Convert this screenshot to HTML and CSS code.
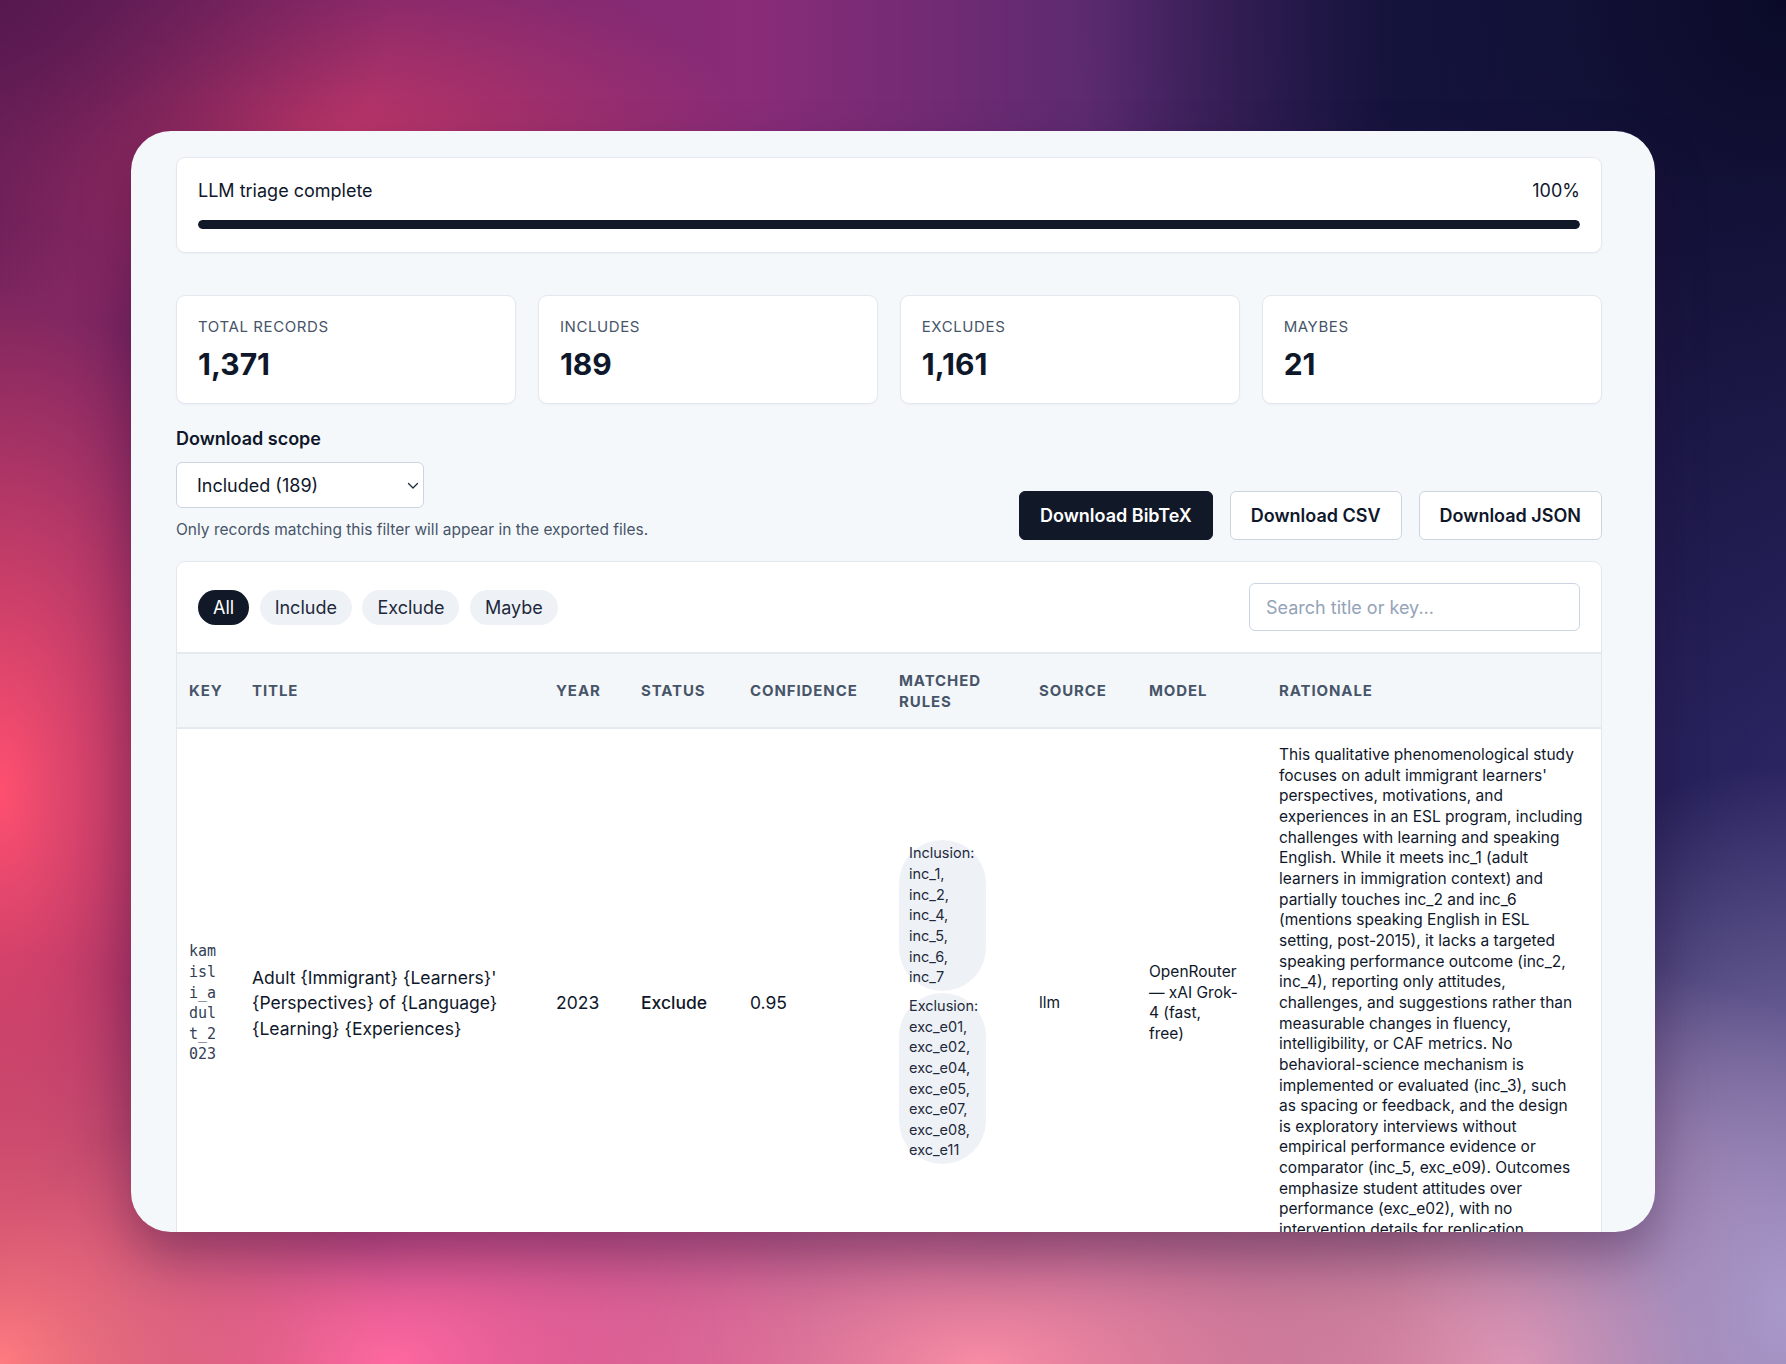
FILE: index.html
```html
<!DOCTYPE html>
<html lang="en">
<head>
  <meta charset="UTF-8">
  <title>LLM triage results</title>
  <link rel="stylesheet" href="styles.css">
</head>
<body>
  <div class="frame">
    <div class="progress-card">
      <div class="progress-head">
        <span>LLM triage complete</span>
        <span>100%</span>
      </div>
      <div class="progress-track"><div class="progress-fill" style="width: 100%"></div></div>
    </div>

    <div class="stats">
      <div class="stat">
        <div class="stat-label">Total records</div>
        <div class="stat-value">1,371</div>
      </div>
      <div class="stat">
        <div class="stat-label">Includes</div>
        <div class="stat-value">189</div>
      </div>
      <div class="stat">
        <div class="stat-label">Excludes</div>
        <div class="stat-value">1,161</div>
      </div>
      <div class="stat">
        <div class="stat-label">Maybes</div>
        <div class="stat-value">21</div>
      </div>
    </div>

    <div class="export-row">
      <div class="scope">
        <label class="scope-label" for="scope">Download scope</label>
        <div class="select-wrap">
          <select id="scope" class="scope-select">
            <option>Included (189)</option>
            <option>Excluded (1,161)</option>
            <option>Maybe (21)</option>
            <option>All (1,371)</option>
          </select>
          <svg class="chevron" width="12" height="8" viewBox="0 0 12 8" fill="none">
            <path d="M1.5 1.5 6 6l4.5-4.5" stroke="#1e293b" stroke-width="1.3" stroke-linecap="round" stroke-linejoin="round"/>
          </svg>
        </div>
        <p class="hint">Only records matching this filter will appear in the exported files.</p>
      </div>
      <div class="downloads">
        <button class="btn btn-dark">Download BibTeX</button>
        <button class="btn">Download CSV</button>
        <button class="btn">Download JSON</button>
      </div>
    </div>

    <div class="table-card">
      <div class="toolbar">
        <div class="pills">
          <button class="pill active">All</button>
          <button class="pill">Include</button>
          <button class="pill">Exclude</button>
          <button class="pill">Maybe</button>
        </div>
        <input class="search" type="text" placeholder="Search title or key...">
      </div>

      <table class="results">
        <colgroup>
          <col class="c-key">
          <col class="c-title">
          <col class="c-year">
          <col class="c-status">
          <col class="c-conf">
          <col class="c-rules">
          <col class="c-source">
          <col class="c-model">
          <col class="c-rationale">
        </colgroup>
        <thead>
          <tr>
            <th>Key</th>
            <th>Title</th>
            <th>Year</th>
            <th>Status</th>
            <th>Confidence</th>
            <th>Matched rules</th>
            <th>Source</th>
            <th>Model</th>
            <th>Rationale</th>
          </tr>
        </thead>
        <tbody>
          <tr>
            <td><div class="key-text">kamisli_adult_2023</div></td>
            <td class="big">Adult {Immigrant} {Learners}' {Perspectives} of {Language} {Learning} {Experiences}</td>
            <td class="big">2023</td>
            <td class="big status">Exclude</td>
            <td class="big">0.95</td>
            <td>
              <div class="rule-group">Inclusion: inc_1, inc_2, inc_4, inc_5, inc_6, inc_7</div>
              <div class="rule-group">Exclusion: exc_e01, exc_e02, exc_e04, exc_e05, exc_e07, exc_e08, exc_e11</div>
            </td>
            <td class="small">llm</td>
            <td class="small"><div class="model-text">OpenRouter — xAI Grok-4 (fast, free)</div></td>
            <td class="small rationale">This qualitative phenomenological study<br>
              focuses on adult immigrant learners'<br>
              perspectives, motivations, and<br>
              experiences in an ESL program, including<br>
              challenges with learning and speaking<br>
              English. While it meets inc_1 (adult<br>
              learners in immigration context) and<br>
              partially touches inc_2 and inc_6<br>
              (mentions speaking English in ESL<br>
              setting, post-2015), it lacks a targeted<br>
              speaking performance outcome (inc_2,<br>
              inc_4), reporting only attitudes,<br>
              challenges, and suggestions rather than<br>
              measurable changes in fluency,<br>
              intelligibility, or CAF metrics. No<br>
              behavioral-science mechanism is<br>
              implemented or evaluated (inc_3), such<br>
              as spacing or feedback, and the design<br>
              is exploratory interviews without<br>
              empirical performance evidence or<br>
              comparator (inc_5, exc_e09). Outcomes<br>
              emphasize student attitudes over<br>
              performance (exc_e02), with no<br>
              intervention details for replication.<br>
              Exclusion is warranted.</td>
          </tr>
        </tbody>
      </table>
    </div>
  </div>
</body>
</html>
```

FILE: styles.css
```css
* {
  box-sizing: border-box;
}

html, body {
  margin: 0;
  height: 100%;
}

body {
  font-family: Inter, "Noto Sans", sans-serif;
  color: #0f172a;
  overflow: hidden;
  padding-top: 131px;
  background:
    radial-gradient(22% 22% at 0% 0%, rgba(84, 24, 78, 0.9), transparent),
    radial-gradient(24% 15% at 18% 11%, rgba(198, 56, 104, 0.95), transparent),
    radial-gradient(16% 42% at 0% 58%, rgba(255, 80, 112, 1), transparent),
    radial-gradient(22% 30% at 0% 100%, rgba(255, 124, 128, 1), transparent),
    radial-gradient(24% 22% at 22% 100%, rgba(255, 104, 160, 1), transparent),
    radial-gradient(40% 24% at 55% 100%, rgba(248, 140, 164, 1), transparent),
    radial-gradient(22% 40% at 100% 96%, rgba(168, 152, 202, 1), transparent),
    radial-gradient(30% 30% at 85% 100%, rgba(226, 152, 180, 1), transparent),
    radial-gradient(40% 55% at 100% 0%, rgba(10, 10, 40, 1), transparent),
    linear-gradient(90deg, #6a1f5c 0%, #8a2c78 42%, #5a2a70 62%, #1c1a4c 78%, #2a2460 100%);
}

.frame {
  width: 1524px;
  height: 1101px;
  margin: 0 auto;
  padding: 26px 53px 0 45px;
  background: #f5f8fb;
  border-radius: 40px;
  overflow: hidden;
  box-shadow: 0 24px 50px rgba(40, 10, 50, 0.35);
}

/* progress */

.progress-card {
  background: #fff;
  border: 1px solid #e2e8f0;
  border-radius: 9px;
  padding: 20px 21px 23px;
  box-shadow: 0 1px 2px rgba(15, 23, 42, 0.04);
}

.progress-head {
  display: flex;
  justify-content: space-between;
  font-size: 18px;
  line-height: 26px;
  margin-bottom: 16px;
}

.progress-track {
  height: 9px;
  background: #e2e8f0;
  border-radius: 6px;
  overflow: hidden;
}

.progress-fill {
  height: 100%;
  background: #111827;
  border-radius: 6px;
}

/* stats */

.stats {
  display: grid;
  grid-template-columns: repeat(4, 1fr);
  gap: 21.5px;
  margin-top: 42px;
}

.stat {
  background: #fff;
  border: 1px solid #e2e8f0;
  border-radius: 9px;
  padding: 21px 21px 20px;
  box-shadow: 0 1px 2px rgba(15, 23, 42, 0.04);
}

.stat-label {
  font-size: 15px;
  line-height: 20px;
  letter-spacing: 0.04em;
  text-transform: uppercase;
  color: #475569;
}

.stat-value {
  font-size: 30px;
  line-height: 38px;
  font-weight: 700;
  margin-top: 8px;
  color: #0f172a;
}

/* export row */

.export-row {
  display: flex;
  justify-content: space-between;
  align-items: flex-end;
  margin-top: 22px;
}

.scope-label {
  display: block;
  font-size: 18px;
  line-height: 26px;
  font-weight: 600;
  color: #0f172a;
}

.select-wrap {
  position: relative;
  width: 248px;
  margin-top: 10px;
}

.scope-select {
  appearance: none;
  width: 100%;
  height: 46px;
  padding: 0 36px 0 20px;
  font-family: inherit;
  font-size: 18px;
  color: #0f172a;
  background: #fff;
  border: 1.5px solid #cbd5e1;
  border-radius: 6px;
}

.chevron {
  position: absolute;
  right: 5px;
  top: 20px;
  pointer-events: none;
}

.hint {
  margin: 11px 0 0;
  font-size: 15.5px;
  line-height: 22px;
  color: #475569;
}

.downloads {
  display: flex;
  gap: 17px;
  margin-bottom: 1px;
}

.btn {
  height: 49px;
  padding: 0 20px;
  font-family: inherit;
  font-size: 18px;
  font-weight: 600;
  color: #0f172a;
  background: #fff;
  border: 1.5px solid #cbd5e1;
  border-radius: 6px;
  cursor: pointer;
}

.btn-dark {
  background: #111827;
  border-color: #111827;
  color: #fff;
}

/* table card */

.table-card {
  margin-top: 20px;
  background: #fff;
  border: 1px solid #e2e8f0;
  border-radius: 9px;
  overflow: hidden;
}

.toolbar {
  display: flex;
  justify-content: space-between;
  align-items: center;
  padding: 21px;
  border-bottom: 2px solid #e5eaf0;
}

.pills {
  display: flex;
  gap: 10.5px;
}

.pill {
  height: 35px;
  padding: 0 15px;
  font-family: inherit;
  font-size: 18px;
  color: #1e293b;
  background: #eef2f7;
  border: none;
  border-radius: 18px;
}

.pill.active {
  background: #111827;
  color: #fff;
}

.search {
  width: 331px;
  height: 48px;
  padding: 0 16px;
  font-family: inherit;
  font-size: 18px;
  color: #0f172a;
  border: 1.5px solid #cbd5e1;
  border-radius: 6px;
}

.search::placeholder {
  color: #94a3b8;
}

.results {
  width: 100%;
  table-layout: fixed;
  border-collapse: collapse;
}

.c-key { width: 63px; }
.c-title { width: 304px; }
.c-year { width: 85px; }
.c-status { width: 109px; }
.c-conf { width: 149px; }
.c-rules { width: 140px; }
.c-source { width: 110px; }
.c-model { width: 130px; }
.c-rationale { width: auto; }

.results th {
  height: 74px;
  padding: 0 12px;
  text-align: left;
  font-size: 15px;
  line-height: 21px;
  font-weight: 700;
  letter-spacing: 0.06em;
  text-transform: uppercase;
  color: #475569;
  background: #f4f7fa;
  border-bottom: 2px solid #e5eaf0;
}

.results td {
  padding: 16px 12px;
  vertical-align: middle;
  color: #0f172a;
}

.key-text {
  width: 30px;
  font-family: "DejaVu Sans Mono", "Liberation Mono", monospace;
  font-size: 15px;
  line-height: 20.6px;
  color: #334155;
  word-break: break-all;
}

.big {
  font-size: 17.5px;
  line-height: 25.6px;
}

.status {
  font-weight: 500;
}

.small {
  font-size: 15.5px;
  line-height: 20.66px;
}

.rule-group {
  width: 87px;
  padding: 3px 10px;
  margin-bottom: 2px;
  font-size: 14.5px;
  line-height: 20.66px;
  color: #1e293b;
  background: #eef2f7;
  border-radius: 44px;
}

.model-text {
  max-width: 89.5px;
}

.rationale {
  padding-right: 6px;
  white-space: nowrap;
}
```
